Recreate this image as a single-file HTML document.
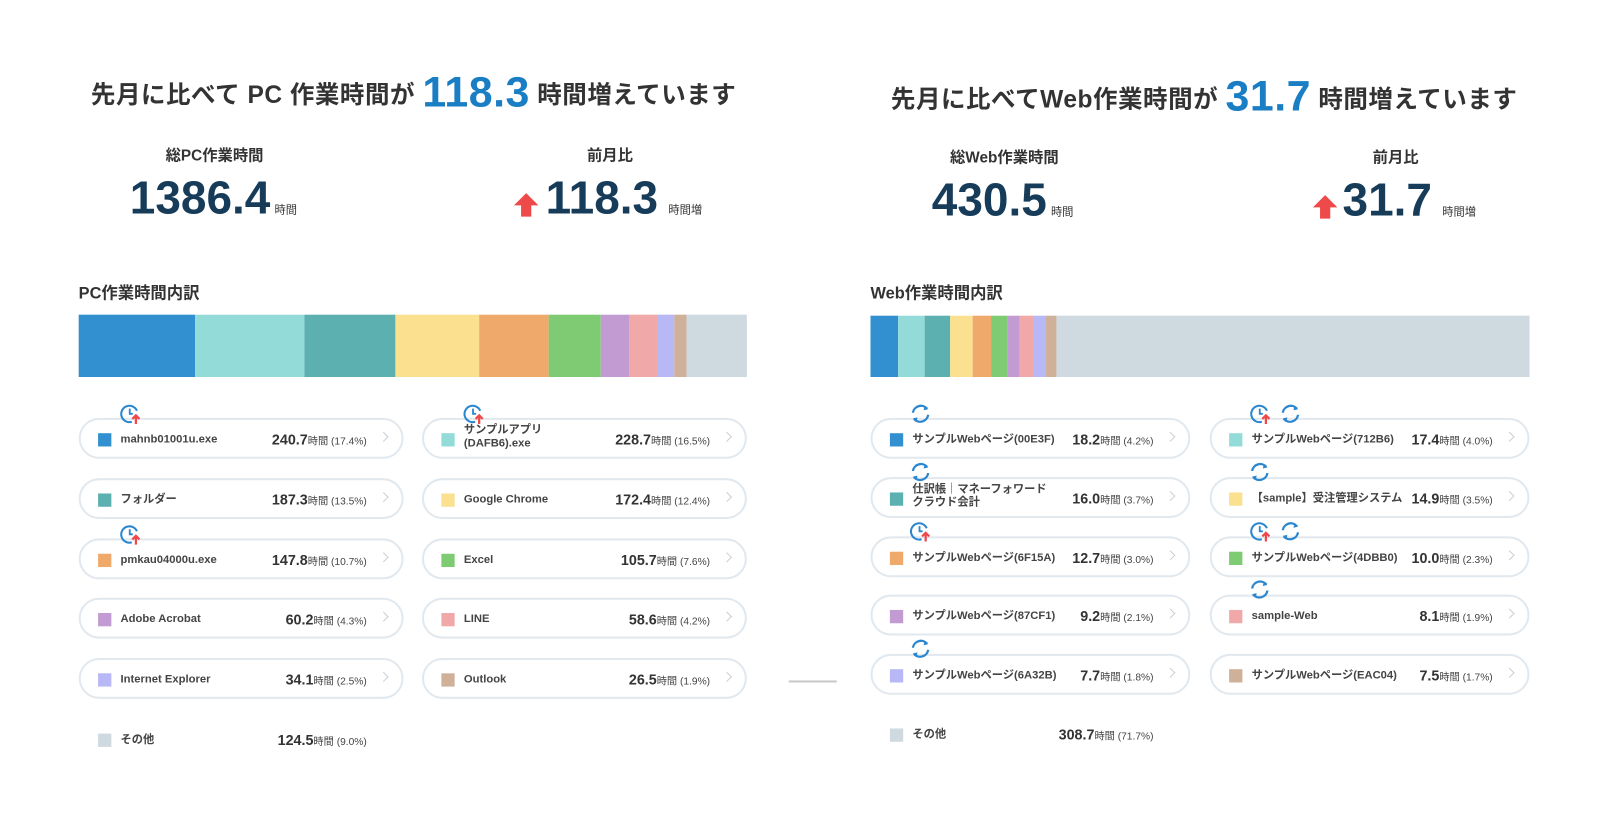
<!DOCTYPE html>
<html><head><meta charset="utf-8"><style>
*{margin:0;padding:0;box-sizing:border-box}
body{width:1602px;height:838px;background:#fff;position:relative;overflow:hidden;font-family:"Liberation Sans","Noto Sans CJK JP",sans-serif;color:#333}
#w{position:absolute;left:0;top:0;width:1568px;height:820px;transform:scale(1.0217);transform-origin:0 0}
.a{position:absolute;white-space:nowrap}
.title{font-size:24px;font-weight:bold;color:#333;letter-spacing:0.5px}
.title b{font-size:42px;color:#1a7ec4;vertical-align:-3px}
.lab{font-size:15px;font-weight:bold;color:#333;transform:translateX(-50%)}
.big{font-size:45px;font-weight:bold;color:#163c5a}
.big small{font-size:11px;font-weight:normal;color:#333;margin-left:4px}
.h{font-size:16px;font-weight:bold;color:#333}
.bar{position:absolute;height:61px;display:flex}
.bar div{height:100%}
.row{position:absolute;height:40px;border:2px solid #e1e8ee;border-radius:20px}
.sq{position:absolute;left:17px;top:13px;width:13px;height:13px}
.nm{position:absolute;left:39px;top:13px;font-size:11px;font-weight:bold;color:#444;line-height:13px}
.nm.two{top:4px;white-space:normal;width:145px}
.v{position:absolute;right:34px;top:11px;font-size:14px;font-weight:bold;color:#333}
.v small{font-size:10px;font-weight:normal;color:#444}
.ch{position:absolute;right:14px;top:13px;width:7px;height:7px;border-top:1.5px solid #c8d0d6;border-right:1.5px solid #c8d0d6;transform:rotate(45deg)}
.ic{position:absolute;width:22px;height:22px}
</style></head><body>
<svg width="0" height="0" style="position:absolute"><defs>
<symbol id="clk" viewBox="0 0 22 22"><path d="M17 8A8 8 0 1 0 12 18.8" fill="none" stroke="#2a86cf" stroke-width="2"/><path d="M10 6v5h3" fill="none" stroke="#2a86cf" stroke-width="1.8"/><path d="M16 21v-8M12.5 16l3.5-3.5 3.5 3.5" fill="none" stroke="#f04848" stroke-width="2.2"/></symbol>
<symbol id="ref" viewBox="0 0 22 22"><path d="M3.5 10A8 8 0 0 1 17.5 6" fill="none" stroke="#2a86cf" stroke-width="2.2"/><path d="M18.5 12A8 8 0 0 1 4.5 16" fill="none" stroke="#2a86cf" stroke-width="2.2"/><path d="M15 3l3.5 3.5-4.5 1" fill="#2a86cf"/><path d="M7 19l-3.5-3.5 4.5-1" fill="#2a86cf"/></symbol>
<symbol id="up" viewBox="0 0 30 26"><path d="M15 2L3 14h7v11h10V14h7z" fill="#ef4a4a"/></symbol>
</defs></svg>
<div id="w">
<div class="a title" style="left:89px;top:66px">先月に比べて PC 作業時間が <b>118.3</b> 時間増えています</div>
<div class="a lab" style="left:210px;top:141px">総PC作業時間</div>
<div class="a big" style="left:127px;top:168px">1386.4<small>時間</small></div>
<div class="a lab" style="left:597px;top:141px">前月比</div>
<svg class="a" style="left:500px;top:187px" width="30" height="26"><use href="#up"/></svg>
<div class="a big" style="left:534px;top:168px">118.3<small style="margin-left:10px">時間増</small></div>
<div class="a h" style="left:77px;top:273px">PC作業時間内訳</div>
<div class="bar" style="left:77px;top:308px;width:654px">
<div style="width:114px;background:#3290d0"></div><div style="width:107px;background:#93dbd9"></div><div style="width:89px;background:#5cb0b0"></div><div style="width:82px;background:#fbe08f"></div><div style="width:68px;background:#efa96a"></div><div style="width:51px;background:#7ecb73"></div><div style="width:28px;background:#c39bd3"></div><div style="width:28px;background:#f0a9a8"></div><div style="width:16px;background:#b7b8f5"></div><div style="width:12px;background:#cfb098"></div><div style="flex:1;background:#cfd9e0"></div></div>

<div class="row" style="left:77px;top:409px;width:318px"><div class="sq" style="background:#3290d0"></div><div class="nm">mahnb01001u.exe</div><div class="v">240.7<small>時間 (17.4%)</small></div><div class="ch"></div></div>
<div class="row" style="left:413px;top:409px;width:318px"><div class="sq" style="background:#93dbd9"></div><div class="nm two" style="width:125px">サンプルアプリ(DAFB6).exe</div><div class="v">228.7<small>時間 (16.5%)</small></div><div class="ch"></div></div>
<div class="row" style="left:77px;top:468px;width:318px"><div class="sq" style="background:#5cb0b0"></div><div class="nm">フォルダー</div><div class="v">187.3<small>時間 (13.5%)</small></div><div class="ch"></div></div>
<div class="row" style="left:413px;top:468px;width:318px"><div class="sq" style="background:#fbe08f"></div><div class="nm">Google Chrome</div><div class="v">172.4<small>時間 (12.4%)</small></div><div class="ch"></div></div>
<div class="row" style="left:77px;top:527px;width:318px"><div class="sq" style="background:#efa96a"></div><div class="nm">pmkau04000u.exe</div><div class="v">147.8<small>時間 (10.7%)</small></div><div class="ch"></div></div>
<div class="row" style="left:413px;top:527px;width:318px"><div class="sq" style="background:#7ecb73"></div><div class="nm">Excel</div><div class="v">105.7<small>時間 (7.6%)</small></div><div class="ch"></div></div>
<div class="row" style="left:77px;top:585px;width:318px"><div class="sq" style="background:#c39bd3"></div><div class="nm">Adobe Acrobat</div><div class="v">60.2<small>時間 (4.3%)</small></div><div class="ch"></div></div>
<div class="row" style="left:413px;top:585px;width:318px"><div class="sq" style="background:#f0a9a8"></div><div class="nm">LINE</div><div class="v">58.6<small>時間 (4.2%)</small></div><div class="ch"></div></div>
<div class="row" style="left:77px;top:644px;width:318px"><div class="sq" style="background:#b7b8f5"></div><div class="nm">Internet Explorer</div><div class="v">34.1<small>時間 (2.5%)</small></div><div class="ch"></div></div>
<div class="row" style="left:413px;top:644px;width:318px"><div class="sq" style="background:#cfb098"></div><div class="nm">Outlook</div><div class="v">26.5<small>時間 (1.9%)</small></div><div class="ch"></div></div>
<div class="row" style="left:77px;top:703px;width:318px;border-color:transparent"><div class="sq" style="background:#cfd9e0"></div><div class="nm">その他</div><div class="v">124.5<small>時間 (9.0%)</small></div></div>
<svg class="ic" style="left:117px;top:394px"><use href="#clk"/></svg>
<svg class="ic" style="left:453px;top:394px"><use href="#clk"/></svg>
<svg class="ic" style="left:117px;top:512px"><use href="#clk"/></svg>

<div class="a" style="left:772px;top:666px;width:47px;height:2px;background:#c8c8c8"></div>

<div class="a title" style="left:872px;top:70px">先月に比べてWeb作業時間が <b>31.7</b> 時間増えています</div>
<div class="a lab" style="left:983px;top:143px">総Web作業時間</div>
<div class="a big" style="left:912px;top:170px">430.5<small>時間</small></div>
<div class="a lab" style="left:1366px;top:143px">前月比</div>
<svg class="a" style="left:1282px;top:189px" width="30" height="26"><use href="#up"/></svg>
<div class="a big" style="left:1314px;top:170px">31.7<small style="margin-left:10px">時間増</small></div>
<div class="a h" style="left:852px;top:273px">Web作業時間内訳</div>
<div class="bar" style="left:852px;top:309px;width:645px;height:60px">
<div style="width:27px;background:#3290d0"></div><div style="width:26px;background:#93dbd9"></div><div style="width:25px;background:#5cb0b0"></div><div style="width:22px;background:#fbe08f"></div><div style="width:18px;background:#efa96a"></div><div style="width:16px;background:#7ecb73"></div><div style="width:12px;background:#c39bd3"></div><div style="width:14px;background:#f0a9a8"></div><div style="width:11px;background:#b7b8f5"></div><div style="width:11px;background:#cfb098"></div><div style="flex:1;background:#cfd9e0"></div></div>

<div class="row" style="left:852px;top:409px;width:313px"><div class="sq" style="background:#3290d0"></div><div class="nm">サンプルWebページ(00E3F)</div><div class="v">18.2<small>時間 (4.2%)</small></div><div class="ch"></div></div>
<div class="row" style="left:1184px;top:409px;width:313px"><div class="sq" style="background:#93dbd9"></div><div class="nm">サンプルWebページ(712B6)</div><div class="v">17.4<small>時間 (4.0%)</small></div><div class="ch"></div></div>
<div class="row" style="left:852px;top:467px;width:313px"><div class="sq" style="background:#5cb0b0"></div><div class="nm two">仕訳帳｜マネーフォワード クラウド会計</div><div class="v">16.0<small>時間 (3.7%)</small></div><div class="ch"></div></div>
<div class="row" style="left:1184px;top:467px;width:313px"><div class="sq" style="background:#fbe08f"></div><div class="nm">【sample】受注管理システム</div><div class="v">14.9<small>時間 (3.5%)</small></div><div class="ch"></div></div>
<div class="row" style="left:852px;top:525px;width:313px"><div class="sq" style="background:#efa96a"></div><div class="nm">サンプルWebページ(6F15A)</div><div class="v">12.7<small>時間 (3.0%)</small></div><div class="ch"></div></div>
<div class="row" style="left:1184px;top:525px;width:313px"><div class="sq" style="background:#7ecb73"></div><div class="nm">サンプルWebページ(4DBB0)</div><div class="v">10.0<small>時間 (2.3%)</small></div><div class="ch"></div></div>
<div class="row" style="left:852px;top:582px;width:313px"><div class="sq" style="background:#c39bd3"></div><div class="nm">サンプルWebページ(87CF1)</div><div class="v">9.2<small>時間 (2.1%)</small></div><div class="ch"></div></div>
<div class="row" style="left:1184px;top:582px;width:313px"><div class="sq" style="background:#f0a9a8"></div><div class="nm">sample-Web</div><div class="v">8.1<small>時間 (1.9%)</small></div><div class="ch"></div></div>
<div class="row" style="left:852px;top:640px;width:313px"><div class="sq" style="background:#b7b8f5"></div><div class="nm">サンプルWebページ(6A32B)</div><div class="v">7.7<small>時間 (1.8%)</small></div><div class="ch"></div></div>
<div class="row" style="left:1184px;top:640px;width:313px"><div class="sq" style="background:#cfb098"></div><div class="nm">サンプルWebページ(EAC04)</div><div class="v">7.5<small>時間 (1.7%)</small></div><div class="ch"></div></div>
<div class="row" style="left:852px;top:698px;width:313px;border-color:transparent"><div class="sq" style="background:#cfd9e0"></div><div class="nm">その他</div><div class="v">308.7<small>時間 (71.7%)</small></div></div>
<svg class="ic" style="left:890px;top:394px"><use href="#ref"/></svg>
<svg class="ic" style="left:1223px;top:394px"><use href="#clk"/></svg>
<svg class="ic" style="left:1252px;top:394px"><use href="#ref"/></svg>
<svg class="ic" style="left:890px;top:451px"><use href="#ref"/></svg>
<svg class="ic" style="left:1222px;top:451px"><use href="#ref"/></svg>
<svg class="ic" style="left:890px;top:509px"><use href="#clk"/></svg>
<svg class="ic" style="left:1223px;top:509px"><use href="#clk"/></svg>
<svg class="ic" style="left:1252px;top:509px"><use href="#ref"/></svg>
<svg class="ic" style="left:1222px;top:566px"><use href="#ref"/></svg>
<svg class="ic" style="left:890px;top:624px"><use href="#ref"/></svg>
</div>
</body></html>
